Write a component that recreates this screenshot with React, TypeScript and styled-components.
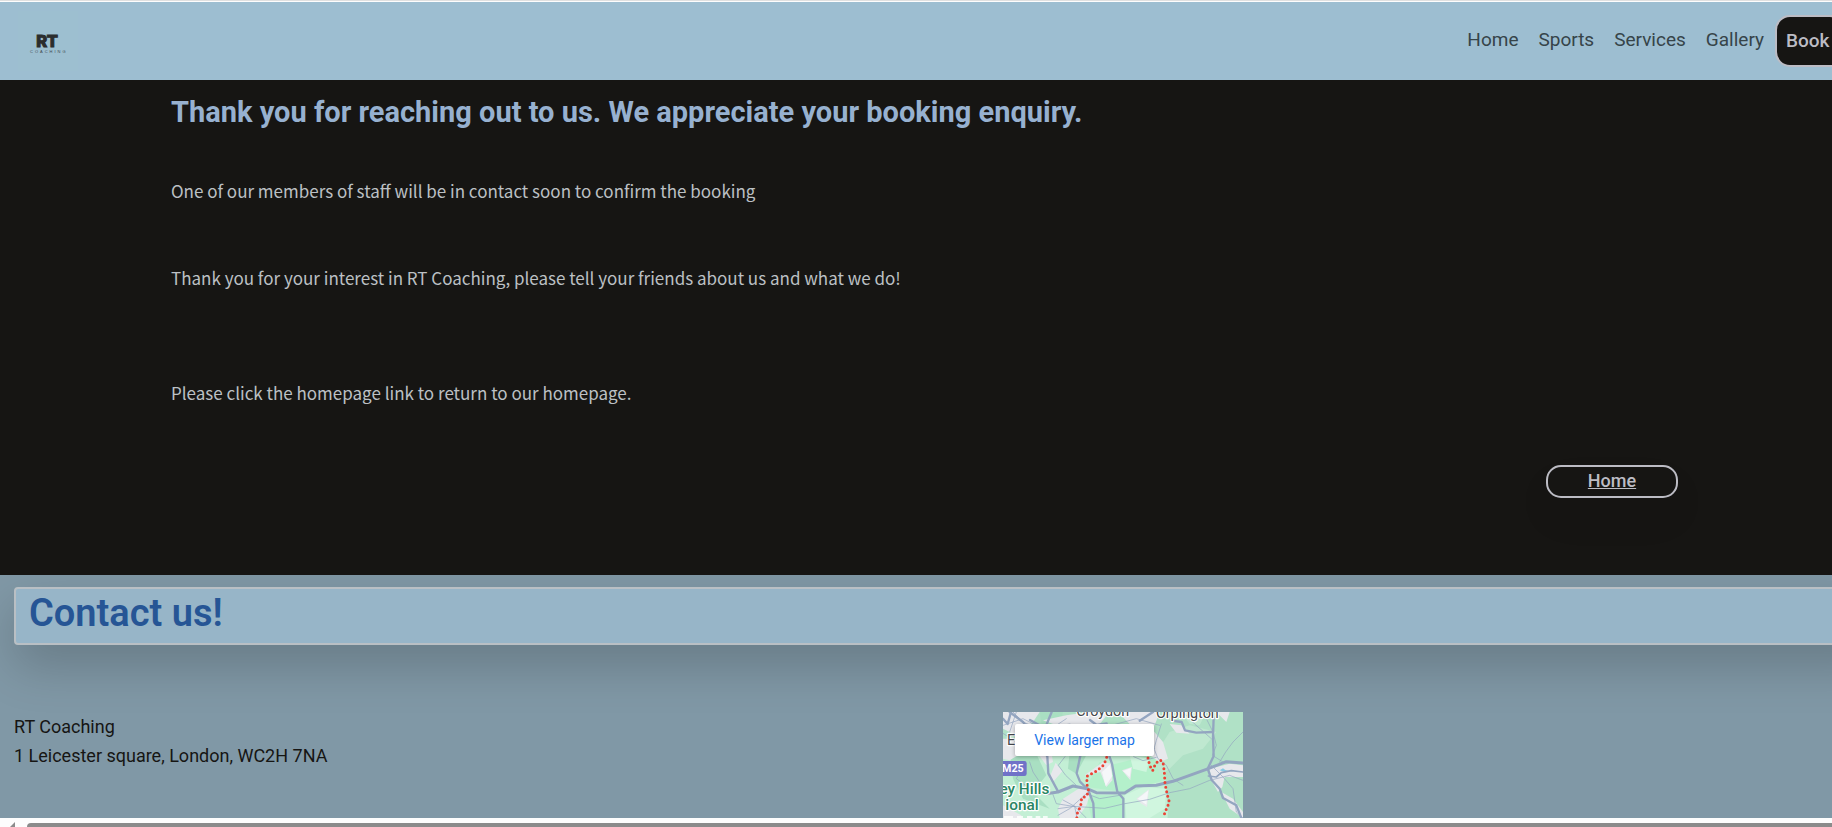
import React from "react";
import styled, { createGlobalStyle } from "styled-components";

const display = `Roboto, "Noto Sans", sans-serif`;
const body = `"Noto Sans CJK SC", "Open Sans", sans-serif`;

const GlobalStyle = createGlobalStyle`
  *, *::before, *::after { box-sizing: border-box; }
  body { margin: 0; background: #fff; }
  h1, h2, p { margin: 0; }
`;

const Viewport = styled.div`
  display: flex;
  flex-direction: column;
  height: 100vh;
  overflow: hidden;
  background: #fdfdfd;
  border-top: 1px solid #e0e0e0;
`;

/* The document is one scrollbar wider than the window. */
const Page = styled.div`
  flex: 1;
  min-height: 0;
  width: calc(100% + 17px);
  margin-top: 1px;
  display: flex;
  flex-direction: column;
  overflow: hidden;
  background: #8098a6;
  font-family: ${display};
  font-size: 18px;
`;

const Header = styled.header`
  flex: none;
  display: flex;
  align-items: center;
  justify-content: space-between;
  height: 78px;
  padding: 0 4px 0 18px;
  background: #9dbed1;
`;

const LogoLink = styled.a`
  display: block;
  width: 60px;
  height: 60px;
  background: #9dbfd0;
  svg { display: block; }
`;

const Nav = styled.nav`
  display: flex;
  align-items: center;
  gap: 20px;
`;

const NavLink = styled.a`
  padding-bottom: 2px;
  color: #364449;
  font-size: 19px;
  line-height: 24px;
  text-decoration: none;
`;

const BookLink = styled.a`
  width: 70px;
  height: 52px;
  margin-left: -9px;
  padding: 0 9px;
  border: 2px solid #bcbcc4;
  border-radius: 15px;
  background: #161513;
  color: #bcbcc4;
  font-size: 19px;
  font-weight: 500;
  line-height: 48px;
  text-decoration: none;
`;

const Main = styled.main`
  flex: none;
  display: flex;
  flex-direction: column;
  height: 495px;
  padding: 12px 171px 0;
  background: #161513;
`;

const Title = styled.h1`
  color: #97b1d0;
  font-size: 29px;
  font-weight: 700;
  line-height: 40px;
`;

const Message = styled.p<{ $gap: number }>`
  margin-top: ${(p) => p.$gap}px;
  color: #bcc0c4;
  font-family: ${body};
  font-size: 17px;
  line-height: 29px;
`;

const HomeLink = styled.a`
  align-self: flex-end;
  width: 132px;
  height: 33px;
  margin-top: 58px;
  border: 2px solid #bcbcc4;
  border-radius: 15px;
  color: #bcbcc4;
  font-weight: 500;
  line-height: 28px;
  text-align: center;
  box-shadow: 0 20px 40px rgba(0, 0, 0, 0.05);
`;

const Footer = styled.footer`
  flex: 1;
  min-height: 0;
  padding: 12px 14px 0;
  overflow: hidden;
`;

const ContactBar = styled.div`
  height: 58px;
  margin-right: -44px;
  padding: 0 13px;
  border: 2px solid #b9bfc4;
  border-radius: 4px;
  background: #97b5c8;
  box-shadow: 0 20px 50px rgba(0, 0, 0, 0.2);
`;

const ContactTitle = styled.h2`
  color: #265595;
  font-size: 38px;
  font-weight: 600;
  line-height: 48px;
`;

const Details = styled.div`
  display: grid;
  grid-template-columns: 1fr 832px;
  margin-top: 67px;
`;

const Address = styled.address`
  color: #161513;
  font-style: normal;
  line-height: 29px;
`;

const MapFrame = styled.div`
  position: relative;
  width: 240px;
  height: 160px;
  overflow: hidden;
  svg { display: block; }
`;

const LargerMap = styled.a`
  position: absolute;
  top: 12px;
  left: 12px;
  width: 139px;
  height: 32px;
  border-radius: 2px;
  background: #fff;
  box-shadow: 0 1px 4px rgba(0, 0, 0, 0.3);
  color: #1a73e8;
  font-size: 14px;
  line-height: 32px;
  text-align: center;
  text-decoration: none;
`;

const ScrollTrack = styled.div`
  flex: none;
  display: flex;
  align-items: flex-end;
  height: 9px;
  background: #fdfdfd;
  svg { display: block; margin: 0 12px 0 10px; }
`;

const ScrollThumb = styled.div`
  flex: 1;
  height: 4px;
  border-radius: 5px 0 0 0;
  background: #8b8b8b;
`;

const Logo = () => (
  <svg width="60" height="60" viewBox="0 0 60 60" role="img" aria-label="RT Coaching">
    <text x="29" y="36" textAnchor="middle" fontFamily="Roboto, sans-serif" fontWeight="900" fontSize="17" fill="#2b2d2e" stroke="#2b2d2e" strokeWidth="1">RT</text>
    <text x="12" y="42" fontFamily="'Liberation Sans', sans-serif" fontSize="4" letterSpacing="2" fill="#3f4b50">COACHING</text>
  </svg>
);

const road = { fill: "none", stroke: "#93a5c0", strokeLinejoin: "round", strokeLinecap: "round" } as const;

const MapDrawing = () => (
  <svg width="240" height="160" viewBox="0 0 720 480" aria-hidden="true">
    <rect width="720" height="480" fill="#b0e1c6" />
    <path fill="#c3efd5" d="M0 90L120 100L330 100L440 130L485 160L495 300L480 480H0Z" />
    <path fill="#b4f0cb" d="M320 160L440 130L480 150L485 205L360 240L250 225L290 150Z M250 250L360 250L365 318H265Z" />
    <path fill="#a9dfc2" d="M20 120L100 125L130 190L90 240L140 290L60 260L30 200Z M110 0L180 0L170 40L120 60Z M200 120L250 130L220 185L195 170Z" />
    <path fill="#bfe8d0" d="M455 130L500 60L560 40L640 60L600 110L540 130L500 170L470 190Z M530 0H610L590 40L560 35Z" />
    <path fill="#d0f6df" d="M365 250L420 225L490 230L485 290L440 318H370Z M380 130L440 140L430 180L390 170Z" />
    <path fill="#e7e8ec" d="M0 0H110L90 30L40 70L0 50Z M120 25L190 10L260 0H320L290 36H150Z M345 0H470L455 40L380 36Z M450 55L480 90L495 140L470 150L440 130Z M500 36L535 40L560 65L520 62Z" />
    <path fill="#e7e8ec" d="M0 80H45V130L20 145L0 140Z M105 125L145 120L150 150L130 160Z M138 200L158 152L178 178L150 210Z M180 260L230 228L265 235L250 280L225 318H170L165 290Z M245 190L300 150L325 155L328 205L310 225L292 180Z M357 175L387 165L382 205Z M400 260L438 232L432 285L415 275Z M620 170L680 155L720 160V195L665 195L658 225L645 240L625 205Z M0 280L55 310L60 480H0Z M640 0H680L670 30Z M655 240L690 260L720 300V318L680 290Z" />
    <path fill="#f5f7f9" d="M297 180L320 158L328 192L308 222Z M360 177L384 168L380 196Z M404 260L436 235L430 278Z" />
    <path fill="#89cbe4" d="M650 175L660 169L667 174L675 176L667 181Z" />
    <g {...road} strokeWidth="2">
      <path d="M0 40L60 20L120 50L200 36L270 60L340 36L400 20L470 40M30 0L60 30L130 60L190 20M0 64L40 90M40 0L20 60" />
      <path d="M475 36L460 85L453 110L465 140L490 160L510 200L540 220M455 110L440 90" />
      <path d="M150 248L160 275L210 283L305 289L360 276L440 262L500 242L560 230L620 205L680 190L720 205" />
      <path d="M165 310L200 290L250 245L290 260L350 250M165 290L215 283L250 318M215 283L222 318M180 264L215 283" />
      <path d="M600 0L630 60L640 100L628 130L660 150M720 60L690 90L668 120L650 150M625 160L660 195L690 230L700 300L720 318" />
      <path d="M186 134L166 160L188 190L220 220M392 134L420 146L460 136M60 160L40 200L95 240M540 0L575 36L625 80M80 150L90 180L110 210" />
    </g>
    <g {...road} strokeWidth="7">
      <path d="M20 0L60 30L112 95L133 134L136 184L165 238" />
      <path d="M232 131L221 184L231 209L256 234L271 274L273 318V480" />
      <path d="M316 124L327 155L336 204L343 239L361 260L361 318V480" />
      <path d="M81 24L126 49L146 0M126 49L111 76M261 24L281 39L311 34M0 20L14 36L24 0" />
      <path d="M410 26L450 0M505 26L536 30L546 55L580 62L630 60" />
      <path d="M632 16L630 74L632 132L614 170L626 204L650 230L660 258L700 280L715 318L720 334" />
      <path strokeWidth="5" d="M616 192L640 195L655 182L685 176L720 180" />
    </g>
    <path {...road} strokeWidth="9" d="M130 245L165 240L210 222L252 230L280 242L365 243L398 222L460 220L510 208L610 172L670 149L720 153" />
    <path fill="none" stroke="#ea4335" strokeWidth="9" strokeLinecap="round" strokeDasharray="0 14" d="M311 136L303 158L281 177L253 192L251 214L257 236L251 252L236 258L233 282L223 304L220 330M435 138L440 160L449 176L458 154L471 144L480 150L484 180L486 214L493 249L499 270L488 296L480 318" />
    <g fontFamily="Roboto, sans-serif" paintOrder="stroke" stroke="#fff" strokeWidth="7" strokeLinejoin="round">
      <g fill="#45474b" fontSize="43">
        <text x="299" y="11" textAnchor="middle">Croydon</text>
        <text x="553" y="17" textAnchor="middle">Orpington</text>
        <text x="12" y="100">E</text>
      </g>
      <g fill="#2a8663" fontSize="46" fontWeight="500">
        <text x="139" y="245" textAnchor="end">ey Hills</text>
        <text x="107" y="293" textAnchor="end">ional</text>
      </g>
    </g>
    <path d="M0 147H64Q71 147 71 154V185Q71 192 64 192H0Z" fill="#7072c8" />
    <text x="62" y="180" textAnchor="end" fontFamily="Roboto, sans-serif" fontWeight="700" fontSize="32" fill="#fff">M25</text>
    <path d="M6 318V315H30M42 315H60M72 315H88M98 315H112M120 315H134" stroke="#fff" strokeWidth="6" opacity="0.8" fill="none" />
  </svg>
);

const App: React.FC = () => (
  <>
    <GlobalStyle />
    <Viewport>
      <Page>
        <Header>
          <LogoLink href="#home"><Logo /></LogoLink>
          <Nav>
            <NavLink href="#home">Home</NavLink>
            <NavLink href="#sports">Sports</NavLink>
            <NavLink href="#services">Services</NavLink>
            <NavLink href="#gallery">Gallery</NavLink>
            <BookLink href="#book">Book</BookLink>
          </Nav>
        </Header>
        <Main>
          <Title>Thank you for reaching out to us. We appreciate your booking enquiry.</Title>
          <Message $gap={44}>One of our members of staff will be in contact soon to confirm the booking</Message>
          <Message $gap={58}>Thank you for your interest in RT Coaching, please tell your friends about us and what we do!</Message>
          <Message $gap={86}>Please click the homepage link to return to our homepage.</Message>
          <HomeLink href="#home">Home</HomeLink>
        </Main>
        <Footer>
          <ContactBar>
            <ContactTitle>Contact us!</ContactTitle>
          </ContactBar>
          <Details>
            <Address>
              RT Coaching<br />
              1 Leicester square, London, WC2H 7NA
            </Address>
            <MapFrame>
              <MapDrawing />
              <LargerMap href="#map">View larger map</LargerMap>
            </MapFrame>
          </Details>
        </Footer>
      </Page>
      <ScrollTrack aria-hidden="true">
        <svg width="5" height="5" viewBox="0 0 5 5"><path d="M5 0V5H0Z" fill="#8b8b8b" /></svg>
        <ScrollThumb />
      </ScrollTrack>
    </Viewport>
  </>
);

export default App;
